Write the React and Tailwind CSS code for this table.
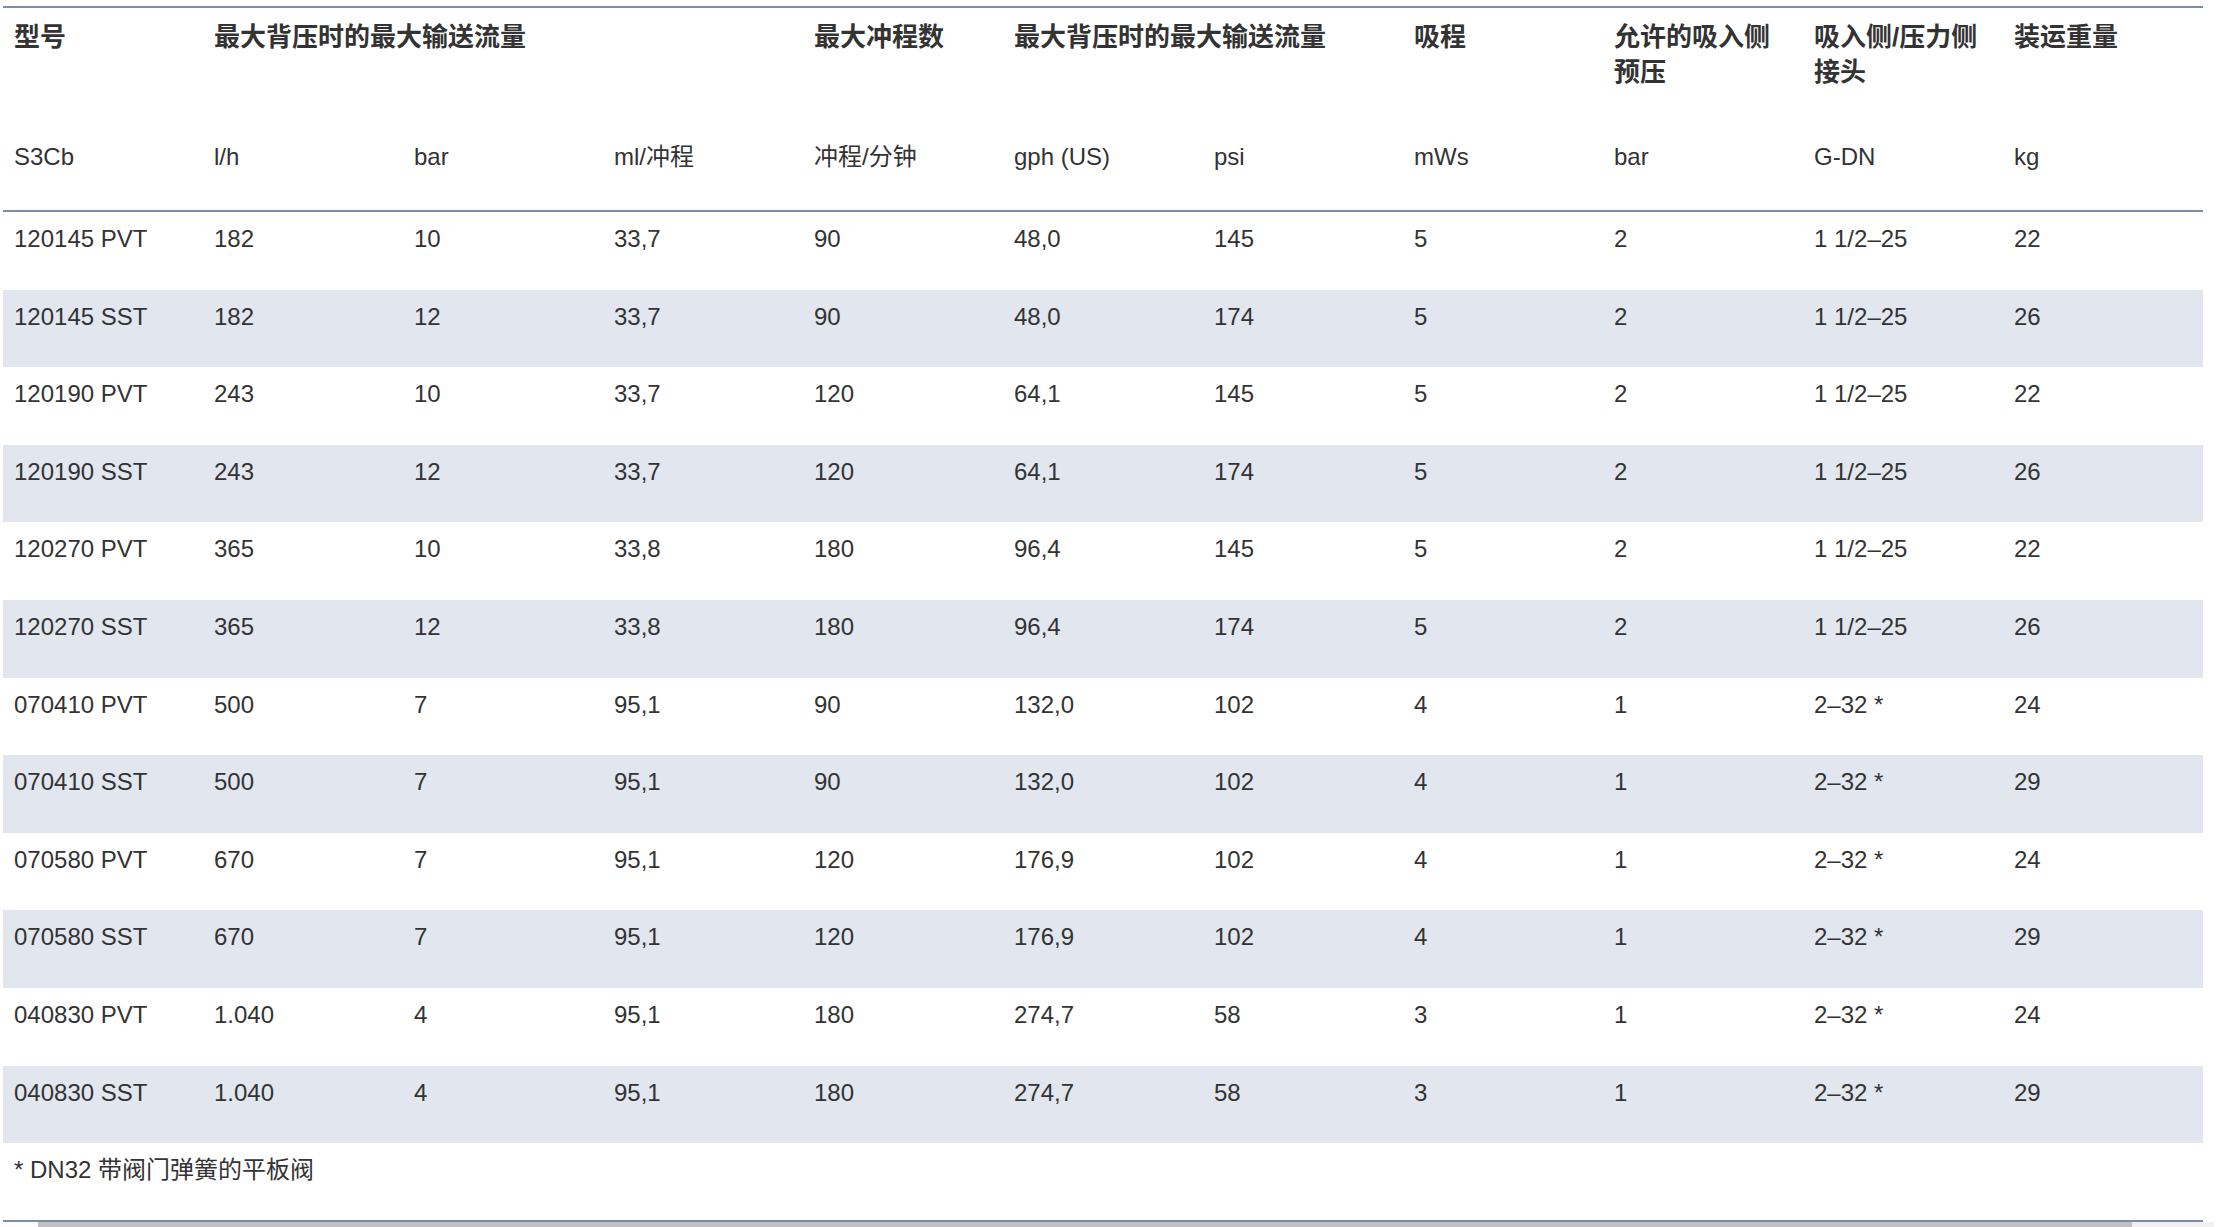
import React from "react";

const FONT = { fontFamily: '"Liberation Sans", "Noto Sans CJK SC", sans-serif' };

const rows = [
  ["120145 PVT", "182", "10", "33,7", "90", "48,0", "145", "5", "2", "1 1/2–25", "22"],
  ["120145 SST", "182", "12", "33,7", "90", "48,0", "174", "5", "2", "1 1/2–25", "26"],
  ["120190 PVT", "243", "10", "33,7", "120", "64,1", "145", "5", "2", "1 1/2–25", "22"],
  ["120190 SST", "243", "12", "33,7", "120", "64,1", "174", "5", "2", "1 1/2–25", "26"],
  ["120270 PVT", "365", "10", "33,8", "180", "96,4", "145", "5", "2", "1 1/2–25", "22"],
  ["120270 SST", "365", "12", "33,8", "180", "96,4", "174", "5", "2", "1 1/2–25", "26"],
  ["070410 PVT", "500", "7", "95,1", "90", "132,0", "102", "4", "1", "2–32 *", "24"],
  ["070410 SST", "500", "7", "95,1", "90", "132,0", "102", "4", "1", "2–32 *", "29"],
  ["070580 PVT", "670", "7", "95,1", "120", "176,9", "102", "4", "1", "2–32 *", "24"],
  ["070580 SST", "670", "7", "95,1", "120", "176,9", "102", "4", "1", "2–32 *", "29"],
  ["040830 PVT", "1.040", "4", "95,1", "180", "274,7", "58", "3", "1", "2–32 *", "24"],
  ["040830 SST", "1.040", "4", "95,1", "180", "274,7", "58", "3", "1", "2–32 *", "29"],
];

const units = ["S3Cb", "l/h", "bar", "ml/冲程", "冲程/分钟", "gph (US)", "psi", "mWs", "bar", "G-DN", "kg"];

function H({ children, span }) {
  return (
    <div
      className={
        "pl-[11px] pt-[12px] text-[26px] font-bold leading-[35px] whitespace-nowrap " +
        (span ? "col-span-2" : "")
      }
    >
      {children}
    </div>
  );
}

export default function App() {
  return (
    <div className="min-h-[1227px] bg-white text-[#333333]" style={FONT}>
      <div className="pt-[6px] pl-[3px]">
        <div className="w-[2200px] border-t-2 border-[#7b8caa]">
          {/* header */}
          <div className="border-b-2 border-[#7b8caa]">
            <div className="grid grid-cols-[repeat(11,200px)] h-[131px]">
              <H>型号</H>
              <H span>最大背压时的最大输送流量</H>
              <H></H>
              <H>最大冲程数</H>
              <H span>最大背压时的最大输送流量</H>
              <H>吸程</H>
              <H>
                允许的吸入侧
                <br />
                预压
              </H>
              <H>
                吸入侧/压力侧
                <br />
                接头
              </H>
              <H>装运重量</H>
            </div>
            <div className="grid grid-cols-[repeat(11,200px)] h-[71px]">
              {units.map((u, i) => (
                <div key={i} className="pl-[11px] text-[24px] leading-[35px] whitespace-nowrap">
                  {u}
                </div>
              ))}
            </div>
          </div>
          {/* body */}
          <div>
            {rows.map((r, i) => (
              <div
                key={i}
                className={
                  "grid grid-cols-[repeat(11,200px)] h-[77.6px] pt-[9px] " +
                  (i % 2 === 1 ? "bg-[#e1e6ef]" : "bg-white")
                }
              >
                {r.map((c, j) => (
                  <div key={j} className="pl-[11px] text-[24px] leading-[35px] whitespace-nowrap">
                    {c}
                  </div>
                ))}
              </div>
            ))}
          </div>
          {/* footnote */}
          <div className="h-[77px] pl-[11px] pt-[9px] text-[24px] leading-[35px]">
            * DN32 带阀门弹簧的平板阀
          </div>
          <div className="border-t-2 border-[#7b8caa]"></div>
        </div>
        <div className="flex h-[5px] w-[2214px] -ml-[3px] bg-[#f1f1f1]">
          <div className="w-[38px] bg-white"></div>
          <div className="w-[2094px] bg-[#c1c1c1]"></div>
        </div>
      </div>
    </div>
  );
}
